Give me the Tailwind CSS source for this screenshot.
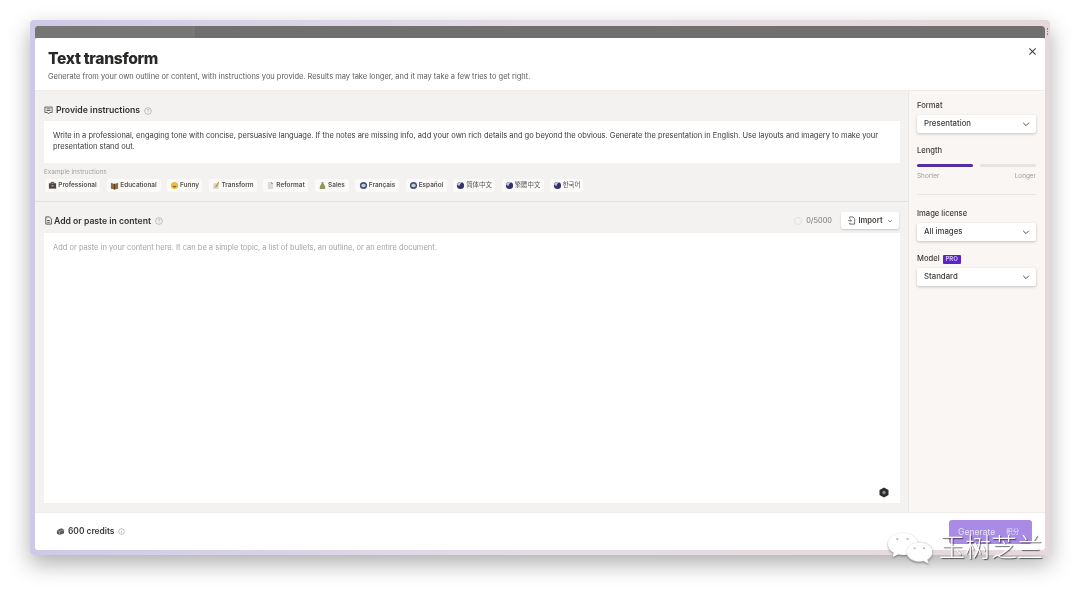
<!DOCTYPE html>
<html>
<head>
<meta charset="utf-8">
<script src="https://cdn.jsdelivr.net/npm/@tailwindcss/browser@4"></script>
</head>
<body class="bg-white overflow-hidden font-['Inter',sans-serif]">
<div class="relative w-[1080px] h-[595px] bg-white overflow-hidden blur-[0.45px]">
  <div class="ml-[30px] mt-[20px] w-[1020px] h-[535px] px-[5px] pt-[6px] pb-[5px] rounded-[4px] bg-gradient-to-r from-[#cfc9e8] via-[#e4dde6] to-[#e6d8da] shadow-[0_9px_22px_rgba(0,0,0,0.32)] flex flex-col">
    <div class="relative h-[12px] shrink-0 bg-[#706f6d] rounded-t-[4px] flex">
      <div class="w-[160px] bg-[#777675] rounded-tl-[4px]"></div>
      <div class="absolute right-[-3px] top-[2px] flex flex-col gap-[1px]">
        <span class="w-[1.500px] h-[1.500px] bg-[#888]"></span><span class="w-[1.500px] h-[1.500px] bg-[#888]"></span><span class="w-[1.500px] h-[1.500px] bg-[#888]"></span>
      </div>
    </div>
    <div class="flex-1 min-h-0 bg-white rounded-[3px] flex flex-col text-[#2c2a28]">
      <!-- header -->
      <div class="relative h-[53px] shrink-0 pl-[13px] pt-[12px] border-b border-[#eeebe8]">
        <h1 class="text-[15.7px] leading-[18px] font-extrabold tracking-[-0.35px] text-[#2b2927]">Text transform</h1>
        <p class="mt-[4px] text-[7.46px] leading-[10px] text-[#5e5b58]">Generate from your own outline or content, with instructions you provide. Results may take longer, and it may take a few tries to get right.</p>
        <svg class="absolute right-[8px] top-[9px] w-[9px] h-[9px]" viewBox="0 0 10 10" fill="none" stroke="#44423f" stroke-width="1.2"><path d="M1.5 1.5l7 7M8.500 1.500l-7 7"/></svg>
      </div>
      <!-- body -->
      <div class="flex-1 min-h-0 flex">
        <div class="w-[874px] shrink-0 bg-[#f3f2f0] border-r border-[#e9e6e3] flex flex-col">
          <!-- instructions -->
          <div class="h-[111px] shrink-0 border-b border-[#e3e1de] px-[9px]">
            <div class="h-[30px] flex items-center gap-[3px] pt-[9px]">
              <svg class="w-[9px] h-[9px]" viewBox="0 0 10 10" fill="none" stroke="#4a4846" stroke-width="0.9"><path d="M1 1.200h8v6H6.200L5 8.800 3.800 7.200H1z"/><path d="M2.800 3.200h4.400M2.800 5h4.400"/></svg>
              <span class="text-[8.7px] font-semibold text-[#33312f]">Provide instructions</span>
              <svg class="ml-[1px] w-[8px] h-[8px]" viewBox="0 0 10 10" fill="none" stroke="#9a9794" stroke-width="0.7"><circle cx="5" cy="5" r="4.200"/><path d="M3.900 4c0-1.500 2.300-1.500 2.300 0 0 .9-1.200.9-1.200 1.800M5 7v.5"/></svg>
            </div>
            <div class="h-[42px] w-[856px] bg-white px-[9px] pt-[9px] text-[7.5px] leading-[11px] text-[#3a3836]">Write in a professional, engaging tone with concise, persuasive language. If the notes are missing info, add your own rich details and go beyond the obvious. Generate the presentation in English. Use layouts and imagery to make your presentation stand out.</div>
            <div class="mt-[5px] text-[6.4px] leading-[8px] text-[#a5a29f]">Example instructions</div>
            <div class="mt-[3px] ml-[1px] flex items-center h-[13px] gap-[6.500px] text-[6.400px] font-semibold text-[#55524f]">
              <span class="h-[13px] w-[55px] bg-[#fbfaf9] rounded-[2px] flex items-center justify-center gap-[1px]"><svg class="w-[9px] h-[9px]" viewBox="0 0 10 10"><path d="M3.500 2.500v-1h3v1" fill="none" stroke="#4a403a"/><rect x="1" y="2.500" width="8" height="6" fill="#4f433d"/><rect x="4" y="4.500" width="2" height="1.500" fill="#c9b08a"/></svg>Professional</span>
              <span class="h-[13px] w-[54px] bg-[#fbfaf9] rounded-[2px] flex items-center justify-center gap-[1px]"><svg class="w-[9px] h-[9px]" viewBox="0 0 10 10"><path d="M1 2l4 1.200L9 2v6.500L5 9.500 1 8.500z" fill="#8d7037"/><path d="M5 3.200v6.300" stroke="#463a1c"/></svg>Educational</span>
              <span class="h-[13px] w-[35px] bg-[#fbfaf9] rounded-[2px] flex items-center justify-center gap-[1px]"><svg class="w-[9px] h-[9px]" viewBox="0 0 10 10"><circle cx="5" cy="5" r="4" fill="#e8bb45"/><path d="M2.800 5.500c1 2 3.400 2 4.400 0z" fill="#7a5a20"/></svg>Funny</span>
              <span class="h-[13px] w-[48px] bg-[#fbfaf9] rounded-[2px] flex items-center justify-center gap-[1px]"><svg class="w-[9px] h-[9px]" viewBox="0 0 10 10"><path d="M2 2.500h6l-1 6H1z" fill="#d8d2c2"/><path d="M7.500 1L4 7" stroke="#b58e3a" stroke-width="1.200"/></svg>Transform</span>
              <span class="h-[13px] w-[45px] bg-[#fbfaf9] rounded-[2px] flex items-center justify-center gap-[1px]"><svg class="w-[9px] h-[9px]" viewBox="0 0 10 10"><path d="M2 1h4l2 2v6H2z" fill="#ddd9d4"/><path d="M6 1l2 2H6z" fill="#77716c"/></svg>Reformat</span>
              <span class="h-[13px] w-[34px] bg-[#fbfaf9] rounded-[2px] flex items-center justify-center gap-[1px]"><svg class="w-[9px] h-[9px]" viewBox="0 0 10 10"><path d="M4 1h2v1.500l2 3.500v3H2V6l2-3.500z" fill="#8c9a5b"/></svg>Sales</span>
              <span class="h-[13px] w-[44px] bg-[#fbfaf9] rounded-[2px] flex items-center justify-center gap-[1px]"><svg class="w-[9px] h-[9px]" viewBox="0 0 10 10"><circle cx="5" cy="5" r="4" fill="#44507a"/><ellipse cx="5" cy="5" rx="2.400" ry="2" fill="#c8ccd8"/></svg>Français</span>
              <span class="h-[13px] w-[41px] bg-[#fbfaf9] rounded-[2px] flex items-center justify-center gap-[1px]"><svg class="w-[9px] h-[9px]" viewBox="0 0 10 10"><circle cx="5" cy="5" r="4" fill="#44507a"/><ellipse cx="5" cy="5" rx="2.400" ry="2" fill="#c8ccd8"/></svg>Español</span>
              <span class="h-[13px] w-[42px] bg-[#fbfaf9] rounded-[2px] flex items-center justify-center gap-[1px] font-normal font-['Inter','Noto_Sans_CJK_SC',sans-serif]"><svg class="w-[9px] h-[9px]" viewBox="0 0 10 10"><circle cx="5" cy="5" r="4" fill="#35346a"/><path d="M1.200 4C2 1.500 5 .5 7 1.500 5 2.500 4 4 4 5.500 3 5.500 2 5 1.200 4z" fill="#c5c7dc"/></svg>简体中文</span>
              <span class="h-[13px] w-[42px] bg-[#fbfaf9] rounded-[2px] flex items-center justify-center gap-[1px] font-normal font-['Inter','Noto_Sans_CJK_TC',sans-serif]"><svg class="w-[9px] h-[9px]" viewBox="0 0 10 10"><circle cx="5" cy="5" r="4" fill="#35346a"/><path d="M1.200 4C2 1.500 5 .5 7 1.500 5 2.500 4 4 4 5.500 3 5.500 2 5 1.200 4z" fill="#c5c7dc"/></svg>繁體中文</span>
              <span class="h-[13px] w-[33px] bg-[#fbfaf9] rounded-[2px] flex items-center justify-center gap-[1px] font-normal font-['Inter','Noto_Sans_CJK_KR',sans-serif]"><svg class="w-[9px] h-[9px]" viewBox="0 0 10 10"><circle cx="5" cy="5" r="4" fill="#35346a"/><path d="M1.200 4C2 1.500 5 .5 7 1.500 5 2.500 4 4 4 5.500 3 5.500 2 5 1.200 4z" fill="#c5c7dc"/></svg>한국어</span>
            </div>
          </div>
          <!-- content -->
          <div class="flex-1 min-h-0 px-[9px] pb-[9px] flex flex-col">
            <div class="h-[31px] shrink-0 flex items-center pt-[6px]">
              <svg class="w-[9px] h-[9px]" viewBox="0 0 10 10" fill="none" stroke="#3d3b39" stroke-width="0.9"><path d="M2 1h4l2.200 2.200V9H2z"/><path d="M3.500 5h3M3.500 7h3"/></svg>
              <span class="ml-px mt-px text-[8.65px] font-semibold text-[#33312f]">Add or paste in content</span>
              <svg class="ml-[4px] w-[8px] h-[8px]" viewBox="0 0 10 10" fill="none" stroke="#9a9794" stroke-width="0.7"><circle cx="5" cy="5" r="4.200"/><path d="M3.900 4c0-1.500 2.300-1.500 2.300 0 0 .9-1.200.9-1.200 1.800M5 7v.5"/></svg>
              <span class="ml-auto w-[8px] h-[8px] rounded-full border border-[#e4e2df]"></span>
              <span class="ml-[4px] text-[7.4px] text-[#77736f]">0/5000</span>
              <span class="ml-[9px] w-[58px] h-[17px] bg-white rounded-[2px] shadow-[0_1px_2px_rgba(0,0,0,0.18)] flex items-center justify-center gap-[2px] text-[7.6px] font-semibold text-[#44423f]">
                <svg class="w-[9px] h-[9px]" viewBox="0 0 10 10" fill="none" stroke="#44423f" stroke-width="0.8"><path d="M3 3V1h3.500L8.500 3v6H3V7.500"/><path d="M1 5.200h4M3.800 4l1.200 1.200-1.200 1.200"/></svg>
                Import
                <svg class="ml-[2px] w-[6px] h-[6px]" viewBox="0 0 10 10" fill="none" stroke="#44423f" stroke-width="1.100"><path d="M2 3.500L5 6.500 8 3.500"/></svg>
              </span>
            </div>
            <div class="relative flex-1 w-[856px] bg-white px-[9px] pt-[10px] text-[7.5px] leading-[10px] text-[#a7a4a1]">
              Add or paste in your content here. It can be a simple topic, a list of bullets, an outline, or an entire document.
              <svg class="absolute right-[11px] bottom-[5px] w-[10px] h-[11px]" viewBox="0 0 10 11"><path d="M5 .5L9.500 3v5L5 10.500.5 8V3z" fill="#2e2d2c"/><circle cx="5" cy="5.500" r="1.700" fill="#8d8b89"/></svg>
            </div>
          </div>
        </div>
        <!-- sidebar -->
        <div class="flex-1 bg-[#f9f6f3] pl-[8px] pr-[9px] pt-[10px] text-[#3c3a38]">
          <div class="text-[7.6px] leading-[10px] font-medium">Format</div>
          <div class="mt-[4px] h-[18px] bg-white rounded-[2px] shadow-[0_1px_3px_rgba(0,0,0,0.22)] pl-[7px] pr-[6px] flex items-center justify-between text-[7.8px] font-medium">Presentation<svg class="w-[8px] h-[8px]" viewBox="0 0 10 10" fill="none" stroke="#44423f" stroke-width="1.200"><path d="M1.500 3.500L5 7l3.500-3.500"/></svg></div>
          <div class="mt-[13px] text-[7.6px] leading-[10px] font-medium">Length</div>
          <div class="mt-[8px] flex gap-[7px]">
            <div class="h-[2.500px] w-[56px] rounded-full bg-[#54309f]"></div>
            <div class="h-[2.500px] w-[56px] rounded-full bg-[#e8e4e1]"></div>
          </div>
          <div class="mt-[5px] flex justify-between text-[6.4px] leading-[8px] text-[#a09d9a]"><span>Shorter</span><span>Longer</span></div>
          <div class="mt-[14px] h-px bg-[#e8e5e2]"></div>
          <div class="mt-[14px] text-[7.6px] leading-[10px] font-medium">Image license</div>
          <div class="mt-[4px] h-[18px] bg-white rounded-[2px] shadow-[0_1px_3px_rgba(0,0,0,0.22)] pl-[7px] pr-[6px] flex items-center justify-between text-[7.8px] font-medium">All images<svg class="w-[8px] h-[8px]" viewBox="0 0 10 10" fill="none" stroke="#44423f" stroke-width="1.200"><path d="M1.500 3.500L5 7l3.500-3.500"/></svg></div>
          <div class="mt-[14px] h-[9px] flex items-center gap-[3px] text-[7.6px] leading-[10px] font-medium">Model<span class="w-[18px] h-[9px] rounded-[1px] bg-[#5a25c4] text-[#d9cdf5] text-[6px] font-semibold flex items-center justify-center">PRO</span></div>
          <div class="mt-[4px] h-[18px] bg-white rounded-[2px] shadow-[0_1px_3px_rgba(0,0,0,0.22)] pl-[7px] pr-[6px] flex items-center justify-between text-[7.8px] font-medium">Standard<svg class="w-[8px] h-[8px]" viewBox="0 0 10 10" fill="none" stroke="#44423f" stroke-width="1.200"><path d="M1.500 3.500L5 7l3.500-3.500"/></svg></div>
        </div>
      </div>
      <!-- footer -->
      <div class="h-[38px] shrink-0 border-t border-[#eeebe8] pl-[21px] pr-[13px] flex items-center">
        <svg class="w-[9px] h-[9px] mr-[3px]" viewBox="0 0 10 10"><path d="M1 3.500L6 1.500 9 3v4L4 9 1 7.500z" fill="#5a5856"/><path d="M1 3.500L4 5l5-2M4 5v4" stroke="#e6e4e2" stroke-width="0.5" fill="none"/></svg>
        <span class="text-[8.400px] font-semibold text-[#3c3a38]">600 credits</span>
        <svg class="ml-[4px] w-[7px] h-[7px]" viewBox="0 0 10 10" fill="none" stroke="#8f8c89" stroke-width="0.8"><circle cx="5" cy="5" r="4"/><path d="M5 4.500v2.500M5 3v.6"/></svg>
        <div class="ml-auto w-[83px] h-[24px] rounded-[3px] bg-[#a98ae5] flex items-center pl-[9px] gap-[11px] text-[8.6px] text-[#e9e1f8] self-start mt-[7px]">Generate<span class="text-[6.500px] font-['Noto_Sans_CJK_SC',sans-serif]">积分</span></div>
      </div>
    </div>
  </div>
  <!-- watermark -->
  <div class="absolute left-[888px] top-[532px] flex items-start gap-[7px]">
    <svg class="w-[44px] h-[32px] drop-shadow-[0_1px_1px_rgba(0,0,0,0.4)]" viewBox="4 2 38 31.500" preserveAspectRatio="none">
      <path d="M17 3c-7 0-13 5-13 11 0 3.500 2 6.500 5 8.500l-1 4 5-2.500c1.500.4 3 .6 4.500.6C24 24.600 30 19.500 30 14S24 3 17 3z" fill="#fff"/>
      <path d="M31 12c-6 0-11 4-11 9.500S25 31 31 31c1.300 0 2.500-.2 3.600-.5l4.400 2.500-1-3.700c2.700-1.700 4.400-4.500 4.400-7.800C42.400 16 37 12 31 12z" fill="#fff" stroke="#d8d8d8" stroke-width="0.500"/>
      <circle cx="12" cy="9" r="1" fill="#bbb"/><circle cx="21" cy="9" r="1" fill="#bbb"/><circle cx="27" cy="18" r="1" fill="#bbb"/><circle cx="35" cy="18" r="1" fill="#bbb"/>
    </svg>
    <span class="-mt-[1px] text-[26px] leading-[30px] font-light text-white font-['Noto_Sans_CJK_SC',sans-serif] [text-shadow:1px_1px_1px_rgba(0,0,0,0.6)]">玉树芝兰</span>
  </div>
</div>
</body>
</html>
